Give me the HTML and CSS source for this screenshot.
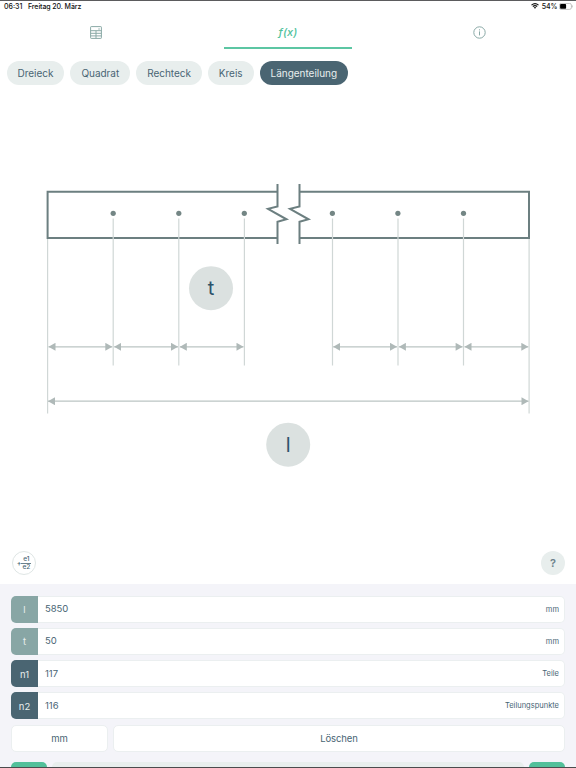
FILE: index.html
```html
<!DOCTYPE html>
<html lang="de">

<head>
    <meta charset="UTF-8">
    <meta name="viewport" content="width=device-width, initial-scale=1.0">
    <title>Längenteilung</title>
    <link rel="stylesheet" href="styles.css">
</head>

<body>
    <div class="app">
        <div class="status-bar">
            <span class="time">06:31</span>
            <span class="date">Freitag 20. März</span>
            <svg class="wifi" width="8" height="6" viewBox="0 0 8 6">
                <path d="M.5 2.1Q4-.8 7.5 2.1M1.8 3.5Q4 1.8 6.2 3.5" fill="none" stroke="#111" stroke-width="1.1" />
                <path d="M2.7 4.4Q4 3.5 5.3 4.4L4 5.8Z" fill="#111" />
            </svg>
            <span class="percent">54%</span>
            <svg width="14" height="7" viewBox="0 0 14 7">
                <rect x=".4" y=".4" width="12" height="6" rx="1.8" fill="none" stroke="#aaa" stroke-width=".7" />
                <rect x="1.1" y="1.1" width="6" height="4.6" rx=".8" fill="#000" />
                <path d="M13.2 2.4v2" stroke="#aaa" stroke-width=".8" />
            </svg>
        </div>

        <nav class="tabs">
            <a class="tab">
                <svg width="12" height="13" viewBox="0 0 12 13" fill="none" stroke="#8aa9a6" stroke-width="1">
                    <rect x=".6" y=".6" width="10.8" height="11.8" rx=".6" />
                    <path d="M.6 4.7h10.8M.6 7.3h10.8M.6 9.9h10.8M6 4.7v7.7M8.3 3h1.5" />
                </svg>
            </a>
            <a class="tab active">f(x)</a>
            <a class="tab">
                <svg width="13" height="13" viewBox="0 0 13 13" fill="none" stroke="#8aa9a6" stroke-width="1">
                    <circle cx="6.5" cy="6.5" r="5.7" />
                    <path d="M6.5 5.4v4M6.5 3.3v1.1" />
                </svg>
            </a>
        </nav>

        <div class="chips">
            <button class="chip">Dreieck</button>
            <button class="chip">Quadrat</button>
            <button class="chip">Rechteck</button>
            <button class="chip">Kreis</button>
            <button class="chip selected">Längenteilung</button>
        </div>

        <main class="drawing">
            <svg width="576" height="320" viewBox="0 170 576 320">
                <defs>
                    <marker id="arrow" viewBox="0 0 7 8" refX="7" refY="4" markerWidth="7.5" markerHeight="8"
                        markerUnits="userSpaceOnUse" orient="auto-start-reverse">
                        <path d="M0 0L7 4L0 8Z" fill="#afb9b8" />
                    </marker>
                </defs>

                <!-- beam with break -->
                <g class="beam">
                    <path d="M277.5 191.7H47.6V237.9H277.5" />
                    <path d="M299.5 191.7H529V237.9H299.5" />
                    <path d="M277.5 184V206.5L268 208.8L286.5 219.3L277.5 221.8V244" />
                    <path d="M299.5 184V206.5L290 208.8L308.5 219.3L299.5 221.8V244" />
                </g>

                <g class="points">
                    <circle cx="113.2" cy="213.3" r="2.6" />
                    <circle cx="178.8" cy="213.3" r="2.6" />
                    <circle cx="244.3" cy="213.3" r="2.6" />
                    <circle cx="332.4" cy="213.3" r="2.6" />
                    <circle cx="397.9" cy="213.3" r="2.6" />
                    <circle cx="463.5" cy="213.3" r="2.6" />
                </g>

                <path class="guides" d="M47.6 239V413.5M113.2 218.5V365.5M178.8 218.5V365.5M244.4 218.5V365.5M332.5 218.5V365.5M398 218.5V365.5M463.5 218.5V365.5M529.1 239V413.5" />

                <g class="measures">
                    <path d="M48.5 346.8H112.3" />
                    <path d="M114.2 346.8H178" />
                    <path d="M179.8 346.8H243.5" />
                    <path d="M333.2 346.8H397" />
                    <path d="M398.9 346.8H462.6" />
                    <path d="M464.5 346.8H528.3" />
                    <path d="M48 401.2H528.5" />
                </g>

                <circle class="bubble" cx="211" cy="288.2" r="22" />
                <text class="bubble-text" x="211" y="295">t</text>
                <circle class="bubble" cx="288.2" cy="444.7" r="22" />
                <text class="bubble-text" x="288.2" y="452">l</text>
            </svg>
        </main>

        <div class="tools">
            <button class="round fraction">
                <span class="plus">+</span>
                <span class="frac"><span class="top">e1</span><span>e2</span></span>
            </button>
            <button class="round help">?</button>
        </div>

        <section class="panel">
            <div class="field">
                <label>l</label>
                <span class="value">5850</span>
                <span class="unit">mm</span>
            </div>
            <div class="field">
                <label>t</label>
                <span class="value">50</span>
                <span class="unit">mm</span>
            </div>
            <div class="field result">
                <label>n1</label>
                <span class="value">117</span>
                <span class="unit">Teile</span>
            </div>
            <div class="field result">
                <label>n2</label>
                <span class="value">116</span>
                <span class="unit">Teilungspunkte</span>
            </div>
            <div class="actions">
                <button class="unit-button">mm</button>
                <button class="clear-button">Löschen</button>
            </div>
            <div class="footer">
                <div class="green"></div>
                <div class="track"></div>
                <div class="green"></div>
            </div>
        </section>
    </div>
</body>

</html>
```
FILE: styles.css
```css
* {
    box-sizing: border-box;
}

body {
    margin: 0;
    font-family: Inter, 'Liberation Sans', sans-serif;
    color: #486574;
    background-color: #fff;
}

button {
    border: none;
    padding: 0;
    font-family: inherit;
    color: inherit;
}

.app {
    display: flex;
    flex-direction: column;
    height: 768px;
    overflow: hidden;
    border-top: 1px solid #5b5b5d;
    border-bottom: 1px solid #4b4b4d;
}

.status-bar {
    display: flex;
    align-items: center;
    height: 10px;
    padding: 0 3px 0 4px;
    font-size: 7px;
    font-weight: 500;
    color: #111;
}

.time {
    width: 24px;
}

.date {
    letter-spacing: -0.08px;
}

.wifi {
    margin-left: auto;
}

.percent {
    margin: 0 1.5px 0 2.5px;
}

.tabs {
    display: grid;
    grid-template-columns: repeat(3, 128px);
    justify-content: space-between;
    height: 38px;
    padding: 0 32px;
}

.tab {
    display: flex;
    justify-content: center;
    align-items: center;
    padding-top: 5px;
}

.tab:last-child {
    padding-right: 1px;
}

.tab.active {
    padding-top: 6px;
    border-bottom: 2px solid #5cc6a3;
    font-size: 11px;
    font-weight: 500;
    font-style: italic;
    letter-spacing: 0.1px;
    color: #50c29c;
}

.chips {
    display: flex;
    gap: 6px;
    padding: 12px 6.5px 0;
}

.chip {
    height: 24px;
    padding: 0 11px;
    border-radius: 12px;
    background-color: #e8eeed;
    font-size: 10px;
    letter-spacing: -0.03px;
}

.chip.selected {
    background-color: #4a6572;
    color: #e8eeed;
}

.drawing {
    height: 320px;
    margin-top: 85px;
}

.drawing svg {
    display: block;
}

.beam {
    fill: none;
    stroke: #6c7f80;
    stroke-width: 2;
}

.points {
    fill: #748685;
}

.guides {
    fill: none;
    stroke: #d0d7d6;
    stroke-width: 1.2;
}

.measures path {
    stroke: #bbc5c3;
    stroke-width: 1.2;
    marker-start: url(#arrow);
    marker-end: url(#arrow);
}

.bubble {
    fill: #dbe1e0;
}

.bubble-text {
    font-size: 20px;
    fill: #2d536b;
    text-anchor: middle;
}

.tools {
    display: flex;
    justify-content: space-between;
    margin-top: 61px;
    padding: 0 11px 0 12px;
}

.round {
    display: flex;
    justify-content: center;
    align-items: center;
    width: 24px;
    height: 24px;
    border-radius: 50%;
}

.fraction {
    border: 1px solid #dfe6e5;
    background-color: #fff;
    font-size: 6.5px;
    font-weight: 500;
}

.plus {
    font-size: 7px;
}

.frac {
    line-height: 7px;
}

.frac span {
    display: block;
    padding: 0 1px;
}

.frac .top {
    border-bottom: 1px solid #6d828d;
}

.help {
    background-color: #e8eeed;
    font-size: 11px;
    font-weight: 600;
    color: #6c828b;
}

.panel {
    flex: 1;
    min-height: 0;
    margin-top: 9px;
    padding: 11.5px 11px 0;
    background-color: #f4f4f9;
}

.field {
    display: flex;
    align-items: center;
    height: 27px;
    margin-bottom: 5.3px;
    border: 1px solid #ebeff0;
    border-left: none;
    border-radius: 5px;
    background-color: #fff;
}

.field label {
    display: flex;
    justify-content: center;
    align-items: center;
    width: 27px;
    height: 27px;
    margin: -1px 0;
    padding-top: 1px;
    border-radius: 5px 0 0 5px;
    background-color: #88a6a5;
    font-size: 9.5px;
    color: #e8eeed;
}

.result label {
    background-color: #4a6572;
}

.value {
    margin-left: 7px;
    padding-bottom: 1px;
    font-size: 9.5px;
    letter-spacing: -0.03px;
}

.unit {
    margin-left: auto;
    padding-right: 5px;
    font-size: 7.5px;
}

.actions {
    display: grid;
    grid-template-columns: 97px 1fr;
    gap: 5px;
}

.actions button {
    height: 27px;
    border: 1px solid #ebeff0;
    border-radius: 5px;
    background-color: #fff;
    font-size: 9.5px;
    letter-spacing: -0.1px;
}

.footer {
    display: grid;
    grid-template-columns: 36px 1fr 36px;
    gap: 5px;
    margin-top: 10px;
}

.green,
.track {
    height: 27px;
    border-radius: 5px;
    background-color: #e8eeed;
}

.green {
    background-color: #52c09a;
}
```
